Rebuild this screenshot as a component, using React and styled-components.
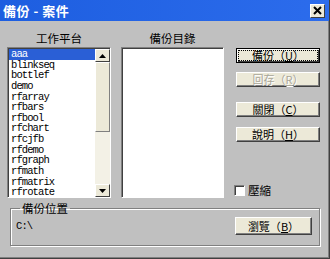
import styled, { createGlobalStyle } from "styled-components"

const Global = createGlobalStyle`
  html, body { margin: 0; padding: 0; background: #c0c0c0; }
  * { box-sizing: border-box; }
`

const cjk = `"Noto Sans CJK TC", "Noto Sans", sans-serif`

const items = [
  "aaa", "blinkseq", "bottlef", "demo", "rfarray", "rfbars", "rfbool",
  "rfchart", "rfcjfb", "rfdemo", "rfgraph", "rfmath", "rfmatrix", "rfrotate",
]

const App = () => {
  return (
    <>
      <Global />
      <Window>
        <TitleBar>
          <Title>備份 - 案件</Title>
          <CloseButton>
            <svg width="9" height="9" viewBox="0 0 9 9">
              <path d="M1 1 L8 8 M8 1 L1 8" stroke="#000" strokeWidth="2" />
            </svg>
          </CloseButton>
        </TitleBar>
        <Body>
          <Top>
            <Column $width={104}>
              <Caption>工作平台</Caption>
              <ListBox>
                <Items>
                  {items.map((it, i) => (
                    <Item key={it} $selected={i === 0}>{it}</Item>
                  ))}
                </Items>
                <ScrollBar>
                  <ArrowButton>
                    <svg width="7" height="4" viewBox="0 0 7 4"><path d="M3.5 0 L7 4 L0 4 Z" fill="#000" /></svg>
                  </ArrowButton>
                  <Thumb />
                  <Track />
                  <ArrowButton>
                    <svg width="7" height="4" viewBox="0 0 7 4"><path d="M0 0 L7 0 L3.5 4 Z" fill="#000" /></svg>
                  </ArrowButton>
                </ScrollBar>
              </ListBox>
            </Column>
            <Column $width={103} $gap={10}>
              <Caption>備份目錄</Caption>
              <EmptyBox />
            </Column>
            <Actions>
              <Button $default $top={19}><Face $focus>備份（<u>U</u>）</Face></Button>
              <Button $top={9} disabled><Face>回存（<u>R</u>）</Face></Button>
              <Button $top={15}><Face>關閉（<u>C</u>）</Face></Button>
              <Button $top={10}><Face>說明（<u>H</u>）</Face></Button>
              <CheckRow>
                <CheckBox />
                <span>壓縮</span>
              </CheckRow>
            </Actions>
          </Top>
          <Group>
            <Legend>備份位置</Legend>
            <GroupRow>
              <Path>C:\</Path>
              <Button $width={77} $height={18}><Face>瀏覽（<u>B</u>）</Face></Button>
            </GroupRow>
          </Group>
        </Body>
      </Window>
    </>
  )
}

export default App

const Window = styled.div`
  width: 330px;
  height: 259px;
  display: flex;
  flex-direction: column;
  background: #c0c0c0;
  border-right: 1px solid #404040;
  border-bottom: 1px solid #404040;
  box-shadow: inset -1px -1px 0 #808080;
  font-family: ${cjk};
  overflow: hidden;
`

const TitleBar = styled.div`
  height: 21px;
  flex: none;
  display: flex;
  align-items: center;
  justify-content: space-between;
  padding: 0 4px 0 3px;
  background: linear-gradient(90deg, #1d5ee0, #2c6cec);
`

const Title = styled.div`
  color: #fff;
  font-size: 13px;
  font-weight: bold;
  letter-spacing: 0.5px;
`

const CloseButton = styled.div`
  width: 15px;
  height: 14px;
  display: grid;
  place-items: center;
  background: #ece9d8;
  border: 1px solid;
  border-color: #fff #404040 #404040 #fff;
`

const Body = styled.div`
  flex: 1;
  display: flex;
  flex-direction: column;
  padding: 8px 0 0 7px;
`

const Top = styled.div`
  display: flex;
  align-items: flex-start;
`

const Column = styled.div`
  width: ${p => p.$width}px;
  margin-left: ${p => p.$gap || 0}px;
  display: flex;
  flex-direction: column;
`

const Caption = styled.div`
  height: 18px;
  font-size: 11.5px;
  line-height: 18px;
  text-align: center;
  color: #000;
`

const sunken = `
  border: 1px solid;
  border-color: #808080 #fff #fff #808080;
  box-shadow: inset 1px 1px 0 #404040;
`

const ListBox = styled.div`
  height: 151px;
  display: flex;
  background: #fff;
  ${sunken}
  padding: 1px 0 0 1px;
`

const Items = styled.div`
  flex: 1;
  font-family: "Liberation Mono", monospace;
  font-size: 10.5px;
  letter-spacing: -0.9px;
  color: #000;
`

const Item = styled.div`
  height: 10.65px;
  line-height: 10.65px;
  padding-left: 2px;
  background: ${p => (p.$selected ? "#2a5fd6" : "transparent")};
  color: ${p => (p.$selected ? "#fff" : "#000")};
`

const ScrollBar = styled.div`
  width: 15px;
  display: flex;
  flex-direction: column;
  background: #f3f1e6;
`

const ArrowButton = styled.div`
  height: 13px;
  flex: none;
  display: grid;
  place-items: center;
  background: #ece9d8;
  border: 1px solid;
  border-color: #fff #404040 #404040 #fff;
`

const Thumb = styled.div`
  height: 70px;
  flex: none;
  background: #ece9d8;
  border: 1px solid;
  border-color: #fff #808080 #808080 #fff;
`

const Track = styled.div`
  flex: 1;
`

const EmptyBox = styled.div`
  height: 151px;
  background: #fff;
  ${sunken}
`

const Actions = styled.div`
  width: 84px;
  margin-left: 12px;
  height: 169px;
  display: flex;
  flex-direction: column;
`

const Button = styled.div`
  width: ${p => p.$width || 84}px;
  height: ${p => p.$height || 15}px;
  margin-top: ${p => p.$top || 0}px;
  flex: none;
  display: flex;
  background: #ece9d8;
  border: 1px solid;
  border-color: ${p => (p.$default ? "#000" : "#fff #404040 #404040 #fff")};
  box-shadow: ${p =>
    p.$default
      ? "inset 1px 1px 0 #fff, inset -1px -1px 0 #404040"
      : "inset -1px -1px 0 #808080"};
  font-size: 11px;
  color: ${p => (p.disabled ? "#a8a699" : "#000")};
  text-shadow: ${p => (p.disabled ? "1px 1px 0 #fff" : "none")};
`

const Face = styled.div`
  flex: 1;
  margin: 1px;
  display: flex;
  align-items: center;
  justify-content: center;
  line-height: 1;
  outline: ${p => (p.$focus ? "1px dotted #000" : "none")};
  outline-offset: -1px;
  white-space: pre;

  u { text-underline-offset: 1px; }
`

const CheckRow = styled.div`
  margin-top: auto;
  margin-left: -2px;
  display: flex;
  align-items: center;
  gap: 3px;
  font-size: 11.5px;
  color: #000;
`

const CheckBox = styled.div`
  width: 11px;
  height: 11px;
  background: #fff;
  ${sunken}
`

const Group = styled.fieldset`
  width: 310px;
  height: 43px;
  margin: 5px 0 0 3px;
  padding: 0 7px 0 5px;
  border: 1px solid #808080;
  box-shadow: 1px 1px 0 #fff, inset 1px 1px 0 #fff;
  min-width: 0;
`

const Legend = styled.legend`
  padding: 0 2px;
  margin-left: 4px;
  font-size: 11.5px;
  line-height: 11px;
  color: #000;
`

const GroupRow = styled.div`
  display: flex;
  align-items: center;
  justify-content: space-between;
  padding-top: 3px;
`

const Path = styled.div`
  font-family: "Liberation Mono", monospace;
  font-size: 10.5px;
  letter-spacing: -0.9px;
  color: #000;
`
